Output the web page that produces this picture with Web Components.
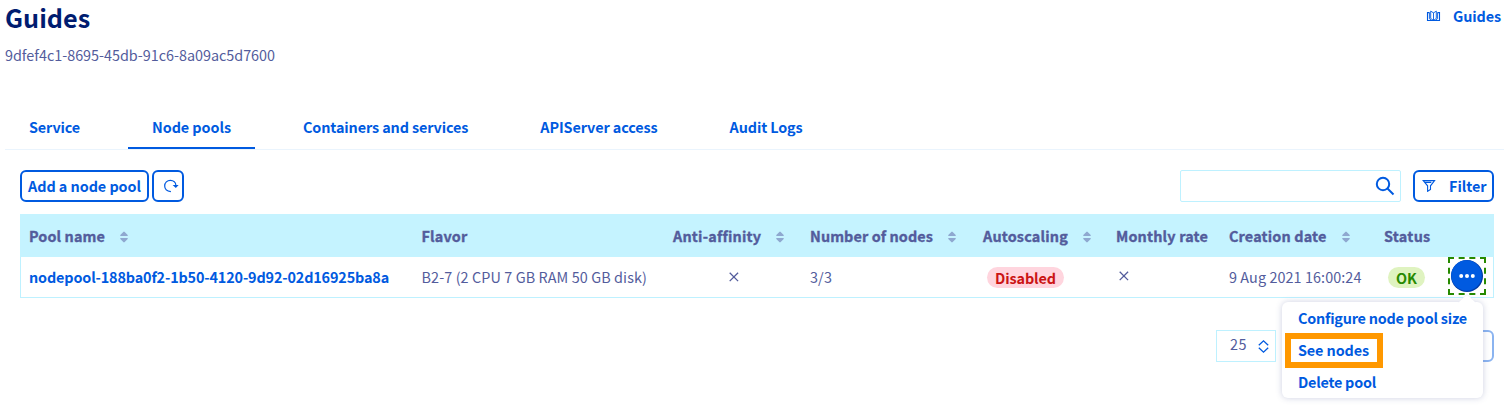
<!DOCTYPE html>
<html lang="en">
<head>
<meta charset="utf-8">
<title>Node pools</title>
<style>
html,body{margin:0;background:#fff}
body{width:1504px;height:407px;overflow:hidden;font:14.4px/32px "Noto Sans CJK SC","Noto Sans",sans-serif;color:#535c9c;--blue:#005ae0}
</style>
</head>
<body>
<pool-page></pool-page>
<script>
const define = (name, html, setup) => customElements.define(name, class extends HTMLElement {
  connectedCallback() {
    if (this.shadowRoot) return;
    const t = document.createElement('template');
    t.innerHTML = html;
    this.attachShadow({mode: 'open'}).append(t.content.cloneNode(true));
    if (setup) setup(this);
  }
});

// Text run whose tracking is adjusted so that it spans the width in its "w" attribute.
define('text-run', `<style>:host{display:inline-block;white-space:pre;font-kerning:normal}</style><slot></slot>`, el => {
  const w = +el.getAttribute('w');
  if (!w) return;
  const n = el.textContent.length;
  const now = el.getBoundingClientRect().width;
  el.style.letterSpacing = ((w - now) / n).toFixed(3) + 'px';
});

define('page-heading', `<style>
:host{display:flex;justify-content:space-between;padding-left:5px;height:106px;box-sizing:border-box}
h1{margin:0;font-size:25.2px;line-height:35px;font-weight:700;color:#001c70}
.id{line-height:39px}
.link{display:flex;align-items:center;height:32px;padding-right:3px;color:var(--blue);font-weight:700;gap:12px}
svg{display:block}
</style>
<div><h1><text-run w="85.300">Guides</text-run></h1><div class="id"><text-run w="270">9dfef4c1-8695-45db-91c6-8a09ac5d7600</text-run></div></div>
<div class="link"><svg width="15" height="12" viewBox="0 0 15 12" fill="none" stroke="#005ae0" stroke-width="1.100"><path d="M3.500 2.600H1.500v7.900h12V2.600h-2"/><path d="M7.500 10.500V2.700M7.500 10.300L4.700 8.500V1.100L7.500 2.900M7.500 10.300l2.800-1.800V1.100L7.500 2.900M3.400 2.600v6.100l2 1.600M11.600 2.600v6.100l-2 1.600" stroke-width=".9"/></svg><text-run w="48">Guides</text-run></div>`);

define('tab-item', `<style>
:host{display:block;box-sizing:border-box;height:43px;line-height:42px;padding:0 24px;color:var(--blue);font-weight:700}
:host([active]){border-bottom:2px solid var(--blue)}
</style><slot></slot>`);

define('tab-bar', `<style>
:host{display:flex;gap:24px;margin-left:5px;border-bottom:1px solid #eaf4fd}
</style><slot></slot>`);

define('outline-button', `<style>
:host{display:flex;box-sizing:border-box;align-items:center;height:32px;border:2px solid var(--blue);border-radius:6px;color:var(--blue);font-weight:700;line-height:28px;background:#fff}
</style><slot></slot>`);

define('tool-bar', `<style>
:host{display:flex;align-items:center;padding:20px 10px 12px 20px}
.add{width:129px;padding-left:6px;margin-right:3px}
.reload{width:32px;padding-left:10px}
.search{box-sizing:border-box;width:221px;height:32px;margin:0 12px 0 auto;border:1px solid #bef1ff;border-radius:2px;display:flex;align-items:center;justify-content:flex-end;padding-right:5px}
.filter{width:81px;padding-left:7px;gap:13px}
svg{display:block;flex:none}
</style>
<outline-button class="add"><text-run w="113">Add a node pool</text-run></outline-button>
<outline-button class="reload"><svg width="15" height="14" viewBox="0 0 15 14" fill="none" stroke="#005ae0" stroke-width="1.200"><path d="M6.900 12.600C3.400 12.100.7 9.900.7 6.900.7 3.700 3.200 1.300 6.300 1.300c3.200 0 5.500 2.200 5.600 5.200"/><path d="M8.600 5.900h6l-2.800 3.100z" fill="#005ae0" stroke="none"/></svg></outline-button>
<div class="search"><svg width="20" height="20" viewBox="0 0 20 20" fill="none" stroke="#005ae0" stroke-width="2"><circle cx="8" cy="8" r="6.200"/><path d="M12.500 12.500l6 6"/></svg></div>
<outline-button class="filter"><svg width="14" height="12" viewBox="0 0 14 12" fill="none" stroke="#005ae0" stroke-width="1.100"><path d="M1.200.6h11.400L8.500 5.800v3.600L5.600 11.300V5.800zM3 2.400h6.300" /></svg><text-run w="37.500">Filter</text-run></outline-button>`);

define('sort-mark', `<style>:host{display:block}svg{display:block}</style>
<svg width="8" height="12" viewBox="0 0 8 12" fill="#8fa8d0"><path d="M3.300.9Q4 .2 4.700.9L7.700 4v.9H.3V4zM3.300 11.100Q4 11.800 4.700 11.100L7.700 8v-.9H.3V8z"/></svg>`);

define('cross-mark', `<style>:host{display:block}svg{display:block}</style>
<svg width="10" height="10" viewBox="0 0 10 10" stroke="#535c9c" stroke-width="1.300"><path d="M.7.7l8.400 8.400M9.100.7L.7 9.100"/></svg>`);

define('status-badge', `<style>
:host{display:inline-flex;justify-content:center;box-sizing:border-box;height:21px;line-height:21px;border-radius:11px;font-weight:700;background:#ffd5de;color:#cb1414}
:host([ok]){background:#dff3c0;color:#278a00}
</style><slot></slot>`);

define('action-menu', `<style>
:host{display:block;position:relative;width:38px;height:38px}
.focus{display:block;box-sizing:border-box;width:38px;height:38px;border:2px dashed #278a00;padding:1px}
.focus svg{display:block}
.menu{position:absolute;left:-166px;top:45px;width:201px;height:96px;background:#fff;border-radius:6px;box-shadow:0 0 6px rgba(77,85,146,.28);color:var(--blue);font-weight:700;z-index:2}
.menu div{height:32px;padding-left:16px;line-height:32px}
.tip{position:absolute;left:10px;top:37px;z-index:3}
.mark{position:absolute;left:-163px;top:76px;width:98px;height:35px;box-sizing:border-box;border:6px solid #ff9800;z-index:4}
</style>
<div class="focus"><svg width="32" height="32" viewBox="3 3 32 32">
<circle cx="19" cy="19" r="16" fill="#003aa5"/><circle cx="18.500" cy="18.500" r="15.300" fill="#005ae0"/>
<g fill="#fff"><circle cx="13.200" cy="19" r="2"/><circle cx="19" cy="19" r="2"/><circle cx="24.800" cy="19" r="2"/></g></svg></div>
<div class="menu"><div><text-run w="169">Configure node pool size</text-run></div><div><text-run w="71">See nodes</text-run></div><div><text-run w="78">Delete pool</text-run></div></div>
<svg class="tip" width="18" height="9" viewBox="0 0 18 9"><path d="M0 9L9 0l9 9z" fill="#fff"/><path d="M.5 8L9 .5 17.500 8" fill="none" stroke="#eeeff7" stroke-width=".7"/></svg>
<div class="mark"></div>`);

define('pool-table', `<style>
:host{display:block;margin:0 10px 0 20px;border:1px solid #bef1ff;border-top:0}
.row{display:grid;grid-template-columns:392.500px 251.500px 137px 173px 133px 113px 155px 64px 46px;padding-left:8px;height:40px;line-height:40px;box-sizing:border-box;width:1472px}
.head{height:43px;line-height:44px;background:#c5f3ff;width:auto;font-weight:700;box-shadow:-1px 0 #c5f3ff,1px 0 #c5f3ff;-webkit-text-stroke:.35px #535c9c}
.row>div{display:flex;align-items:center;white-space:nowrap}
.head>div{gap:15px}
.head sort-mark{margin-top:2px}
.name{color:var(--blue);font-weight:700}
</style>
<div class="row head">
<div><text-run w="76">Pool name</text-run><sort-mark></sort-mark></div>
<div><text-run w="46">Flavor</text-run></div>
<div><text-run w="88">Anti-affinity</text-run><sort-mark></sort-mark></div>
<div><text-run w="123">Number of nodes</text-run><sort-mark></sort-mark></div>
<div><text-run w="85">Autoscaling</text-run><sort-mark></sort-mark></div>
<div><text-run w="92">Monthly rate</text-run></div>
<div><text-run w="97.500">Creation date</text-run><sort-mark></sort-mark></div>
<div><text-run w="46.500">Status</text-run></div><div></div>
</div>
<div class="row">
<div class="name"><text-run w="360">nodepool-188ba0f2-1b50-4120-9d92-02d16925ba8a</text-run></div>
<div><text-run w="225.500">B2-7 (2 CPU 7 GB RAM 50 GB disk)</text-run></div>
<div style="padding-left:56px"><cross-mark></cross-mark></div>
<div><text-run w="22">3/3</text-run></div>
<div style="padding-left:4px"><status-badge style="width:77px"><text-run w="61">Disabled</text-run></status-badge></div>
<div style="padding:0 0 2px 3px"><cross-mark></cross-mark></div>
<div><text-run w="132.500">9 Aug 2021 16:00:24</text-run></div>
<div style="padding-left:4px"><status-badge ok style="width:37px"><text-run w="21">OK</text-run></status-badge></div>
<div style="align-items:flex-start"><action-menu></action-menu></div>
</div>`);

define('table-pager', `<style>
:host{display:flex;justify-content:flex-end;padding:32px 10px 0 0}
.size{box-sizing:border-box;display:flex;align-items:center;justify-content:space-between;width:60px;height:32px;line-height:26px;border:1px solid #bef1ff;padding:0 6px 4px 13px;margin-right:10px}
.size svg{margin-top:5px}
.pages{width:208px;opacity:.45}
</style>
<div class="size"><text-run w="17">25</text-run><svg width="11" height="13" viewBox="0 0 11 13" fill="none" stroke="#005ae0" stroke-width="1.300"><path d="M.8 5.300L5.500.9l4.700 4.400M.8 7.700l4.700 4.400 4.700-4.400"/></svg></div>
<outline-button class="pages"></outline-button>`);

define('pool-page', `<style>:host{display:block}</style>
<page-heading></page-heading>
<tab-bar>
<tab-item><text-run w="51">Service</text-run></tab-item>
<tab-item active><text-run w="79">Node pools</text-run></tab-item>
<tab-item><text-run w="165.300">Containers and services</text-run></tab-item>
<tab-item><text-run w="117.300">APIServer access</text-run></tab-item>
<tab-item><text-run w="73">Audit Logs</text-run></tab-item>
</tab-bar>
<tool-bar></tool-bar>
<pool-table></pool-table>
<table-pager></table-pager>`);
</script>
</body>
</html>
